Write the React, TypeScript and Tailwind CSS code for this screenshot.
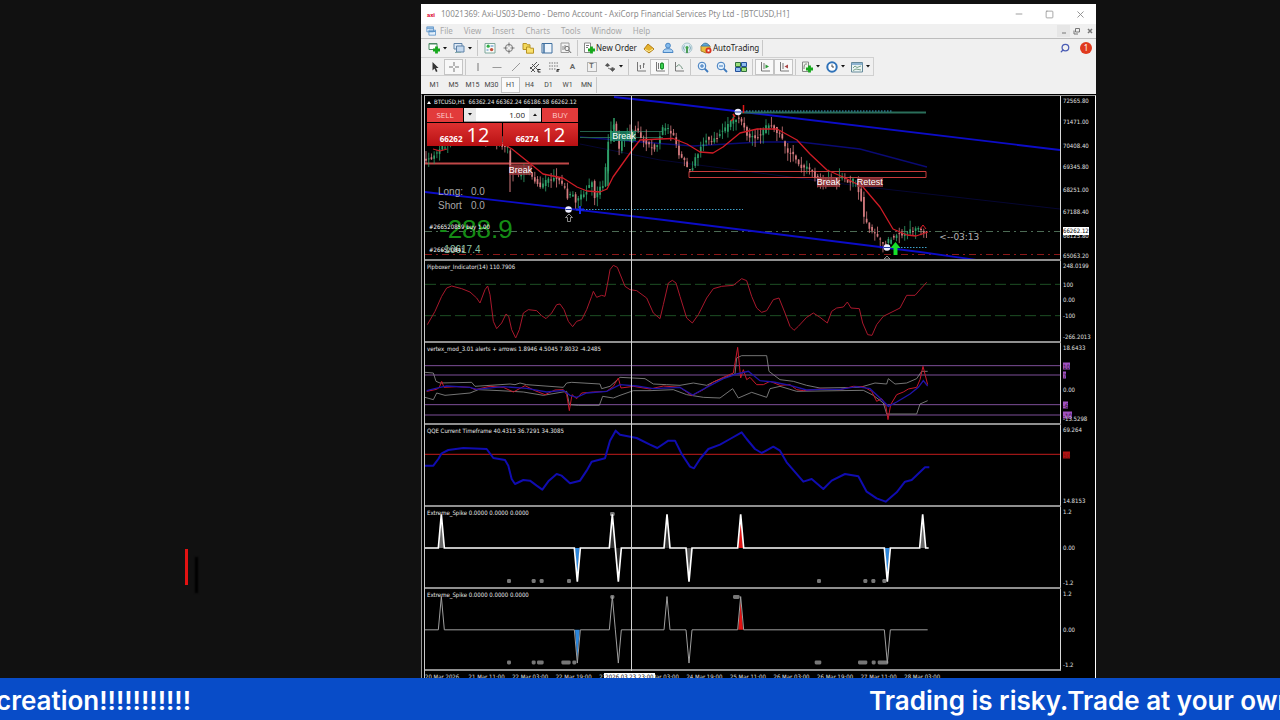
import { useState } from 'react';
import type { ReactNode } from 'react';
import { Minus, Square, X, Search } from 'lucide-react';

type Point = [number, number];

/* ---------- helpers ---------- */

const toPath = (data: string) => 'M' + data.trim().split(/\s+/).join('L');

const parse = (data: string): Point[] =>
  data.trim().split(/\s+/).map((p) => p.split(',').map(Number) as Point);

const priceTrack = parse(`
  425,158 432,160 438,152 445,147 455,138 470,132 490,138 505,147 509,149 511,170 515,172 520,174 530,172 536,180
  543,187 548,181 555,178 562,183 568,192 570,202 573,190 577,203 582,196 588,190 593,180 596,196 602,188
  606,184 608,150 611,135 614,122 618,132 620,150 624,138 631,133 638,130 643,139 650,145 657,148 661,135
  665,127 671,130 676,140 680,155 686,162 690,170 694,167 700,150 708,138 715,141 722,133 728,128 734,120
  740,117 744,122 749,135 754,137 762,135 768,126 774,128 782,136 788,152 796,155 803,168 810,168 816,176
  822,182 828,178 836,182 842,176 850,182 856,181 862,195 866,222 872,228 878,238 884,243 888,244 892,238
  898,235 904,236 912,231 920,229 928,234`);

const priceAt = (x: number) => {
  const i = Math.max(1, priceTrack.findIndex((p) => p[0] >= x));
  const [x0, y0] = priceTrack[i - 1];
  const [x1, y1] = priceTrack[i];
  return y0 + ((y1 - y0) * (x - x0)) / (x1 - x0);
};

const noise = (n: number) => {
  const v = Math.sin(n * 91.7 + 13.1) * 4375.5;
  return v - Math.floor(v);
};

const candles = Array.from({ length: 185 }, (_, i) => {
  const x = 426 + i * 2.72;
  const open = priceAt(x - 1.4) + (noise(i) - 0.5) * 5;
  const close = priceAt(Math.min(x + 1.4, 928)) + (noise(i + 400) - 0.5) * 5;
  const top = Math.min(open, close);
  const bottom = Math.max(open, close, top + 1);
  return {
    x,
    top,
    bottom,
    high: top - noise(i + 90) * 9,
    low: bottom + noise(i + 220) * 9,
    up: close < open,
  };
});

/* ---------- toolbar icons ---------- */

const Icon = ({ children }: { children: ReactNode }) => (
  <svg viewBox="0 0 12 12" className="h-3 w-3 shrink-0" fill="none" stroke="#777" strokeWidth="1" aria-hidden="true">
    {children}
  </svg>
);

const Caret = () => (
  <svg viewBox="0 0 4 3" className="h-[3px] w-1 shrink-0" aria-hidden="true"><path d="M0 0h4L2 2.6z" fill="#111" /></svg>
);

const plus = <path d="M8.500 4.500v7M5 8h7" stroke="#16a81c" strokeWidth="2.800" />;

const icons: Record<string, ReactNode> = {
  newChart: <><path d="M1 1.500h8v6H1z" fill="#fff" stroke="#4a8a62" /><path d="M1 2h8" stroke="#4a8a62" />{plus}</>,
  profiles: <><path d="M1 1.500h8v5.500H1z" fill="#dfeaf6" stroke="#5f83a8" /><path d="M3.500 4h7.500v6H3.500z" fill="#c5d9ee" stroke="#5f83a8" /><path d="M2 10.500h6" stroke="#8aa" /></>,
  market: <><path d="M1 1.500h10v9.500H1z" fill="#f7fbf9" stroke="#7fa89c" /><circle cx="4.200" cy="4.200" r="1.600" fill="#2fae43" stroke="none" /><circle cx="7.600" cy="7.600" r="1.700" fill="#c4513b" stroke="none" /><path d="M6.500 4h3M2.500 8h2" stroke="#4b86c4" /></>,
  target: <><circle cx="6" cy="6" r="3.600" /><path d="M6 .5v4M6 7.500v4M.5 6h4M7.500 6h4" stroke="#777" /></>,
  navigator: <><path d="M1 1.500h3.500l1 1.300H8v4.700H1z" fill="#f4d95a" stroke="#b79324" /><path d="M4.500 5h3l1 1.200h3v5h-7z" fill="#f9e06c" stroke="#b79324" /></>,
  terminal: <><path d="M1 1.500h10v9.500H1z" fill="#eef5fc" stroke="#3f6f9f" /><path d="M3 2v9" stroke="#3f6f9f" strokeWidth="1.500" /></>,
  tester: <><path d="M1 1h8v9.500H1z" fill="#f3f3f3" stroke="#9a9a9a" /><path d="M3 8V4M5 7V3" stroke="#888" /><circle cx="7" cy="6.500" r="2.200" /><path d="M8.600 8.200l2.600 2.800" stroke="#666" /></>,
  order: <><path d="M1.500 1h6v9.500h-6z" fill="#fff" stroke="#888" /><path d="M3 3.500h3M3 5.500h2" />{plus}</>,
  editor: <><path d="M1 7l4-5 6 5-5 4z" fill="#e5b32f" stroke="#b27d15" /><path d="M2 7.500l4 2 4-2.500" stroke="#fff2a8" /></>,
  cloud: <><circle cx="6" cy="3.600" r="2.400" fill="#82b9ec" stroke="#4a86c4" /><path d="M1 10.500c0-3 2-3.800 5-3.800s5 .8 5 3.800z" fill="#a9d1f4" stroke="#4a86c4" /></>,
  signal: <><circle cx="6" cy="6" r="5" fill="#dfeef2" stroke="#a8c4cc" /><path d="M3.500 8.500a4 4 0 0 1 0-5M8.500 8.500a4 4 0 0 0 0-5" stroke="#7fa6b8" /><path d="M6 11V6" stroke="#4c9a55" strokeWidth="2" /><circle cx="6" cy="5.500" r="1.500" fill="#3fa34a" stroke="none" /></>,
  auto: <><path d="M1 4l5-2.500L10 4v5l-4 2-5-2z" fill="#e9bd3d" stroke="#a9802a" /><path d="M1.500 4c2-4 6-3.500 8 0z" fill="#5fa8d6" stroke="#3f7fae" /><circle cx="8.500" cy="8.500" r="3" fill="#d8321f" stroke="none" /><path d="M7.500 7.500h2v2h-2z" fill="#fff" stroke="none" /></>,
  cursor: <path d="M3.500 1v8.500l2-2 1.500 3.500 1.500-.7L7 7h2.600z" fill="#333" stroke="none" />,
  cross: <path d="M6 1v4M6 7v4M1 6h4M7 6h4" />,
  vline: <path d="M6 2v8" />,
  hline: <path d="M1.500 6.500h9" stroke="#999" />,
  trend: <path d="M2 10l8-8" stroke="#999" />,
  channel: <><path d="M1 8l7-7M2 11l8-8M3 3l6 6M1 6l5 5" stroke="#555" /><path d="M9 8.500h2.500M9 11h2.500M9 8v3" stroke="#222" /></>,
  fibo: <><path d="M1 2h10M1 5h10M1 8h7" strokeDasharray="1.500 1" /><path d="M9 11V8.500h2.500M9 10h2" stroke="#333" /></>,
  textBox: <path d="M1.500 1.500h9v9h-9z" strokeDasharray="1 1" />,
  arrows: <><path d="M1 4.500L3.500 2 6 4.500 3.500 6z" fill="#555" stroke="none" /><path d="M6 8l2.500 2.500L11 8 8.500 6.500zM4 7l2 1" fill="#555" /></>,
  bars: <path d="M2.500 1v9h8.500M5.500 8V4M4.500 5h1M8.500 7V2M8.500 3h1.500" stroke="#777" />,
  candles: <><path d="M2.500 1v9h8.500M4.500 2v6" stroke="#777" /><path d="M8 1v8" stroke="#1b8f2b" /><path d="M6.500 2.500h3v5h-3z" fill="#3bd052" stroke="#1b8f2b" /></>,
  line: <><path d="M2.500 1v9h8.500" stroke="#777" /><path d="M3.500 6c2-4 4-2 6 2" stroke="#6a8f7a" /></>,
  zoomIn: <><circle cx="5" cy="5" r="3.800" fill="#e2f0fc" stroke="#3c79bd" /><path d="M3 5h4M5 3v4" stroke="#3c79bd" /><path d="M7.700 7.700l3.300 3.300" stroke="#3c79bd" strokeWidth="1.800" /></>,
  zoomOut: <><circle cx="5" cy="5" r="3.800" fill="#e2f0fc" stroke="#3c79bd" /><path d="M3 5h4" stroke="#3c79bd" /><path d="M7.700 7.700l3.300 3.300" stroke="#3c79bd" strokeWidth="1.800" /></>,
  tile: <><path d="M.5 1.500h5v4h-5zM6.500 6.500h5v4h-5z" fill="#9adf7c" stroke="#2f6f3c" /><path d="M6.500 1.500h5v4h-5zM.5 6.500h5v4h-5z" fill="#8fbdf0" stroke="#234f9a" /></>,
  scroll: <><path d="M2.500 1v9h8.500M5 8V2" stroke="#777" /><path d="M6.500 3.500v4L10 5.500z" fill="#2e9a3a" stroke="none" /></>,
  shift: <><path d="M2.500 1v9h8.500M5 8V2" stroke="#777" /><path d="M10 3.500v4L6.500 5.500z" fill="#a44" stroke="none" /></>,
  indicator: <><path d="M1.500 1h6v9.500h-6z" fill="#eef4ea" stroke="#888" /><path d="M3 8c0-5 1-5 3-5" />{plus}</>,
  clock: <><circle cx="6" cy="6" r="4.700" fill="#fff" stroke="#2f72b8" strokeWidth="2" /><path d="M6 3.500V6h2" stroke="#444" /></>,
  template: <><path d="M.5 1.500h11v9.500H.5z" fill="#eaf4f4" stroke="#668a9a" /><path d="M.5 3h11" stroke="#6f9fc4" strokeWidth="1.500" /><path d="M2 7l2-2 2 1.500L10 5M2 9.500l3-1.500 5 1" stroke="#7aa388" /></>,
};

const Tool = ({ name, caret, boxed, letter }: { name: string; caret?: boolean; boxed?: boolean; letter?: string }) => (
  <button
    aria-label={name}
    className={`relative flex h-4 shrink-0 items-center justify-center gap-[3px] ${caret ? 'w-[25px]' : 'w-[19px]'} ${boxed ? 'border border-[#c4c4c4] bg-[#f8f8f8]' : ''}`}
  >
    {icons[name] && <Icon>{icons[name]}</Icon>}
    {letter && <span className={`font-bold text-[#666] ${icons[name] ? 'absolute text-[7px]' : 'text-[8px]'}`}>{letter}</span>}
    {caret && <Caret />}
  </button>
);

const Divider = () => <span className="mx-[2px] h-4 w-px shrink-0 bg-[#c8c8c8]" />;

/* ---------- chart data (panel units are a third of a pixel) ---------- */

const pipboxer = `22,200 45,160 65,115 80,90 95,84 125,92 150,102 170,120 180,135 195,95 203,84 210,110 220,190 230,212
  245,195 258,168 266,175 275,215 287,240 298,215 310,165 325,155 350,158 365,173 378,182 395,165 410,140 420,138
  432,155 445,190 458,206 470,190 485,185 500,155 515,115 520,100 530,118 545,112 555,115 563,75 570,35 580,22
  592,28 605,60 615,85 630,95 650,98 680,120 700,165 720,182 730,140 745,75 757,67 768,75 780,115 800,180 817,195
  835,170 860,120 880,92 905,85 940,82 965,62 980,68 995,115 1010,150 1025,163 1040,158 1060,125 1077,120 1095,165
  1110,205 1122,217 1135,205 1160,178 1180,165 1200,178 1222,195 1235,160 1250,150 1270,147 1282,132 1293,150
  1318,152 1328,195 1343,230 1356,232 1370,200 1390,175 1440,150 1460,112 1485,112 1500,95 1520,73`;

const vertexFast = `20,400 50,394 58,388 65,370 72,388 110,386 150,388 165,395 210,385 250,388 280,402 315,383 345,398
  375,410 405,396 430,395 440,410 448,458 456,410 470,422 485,405 520,402 560,400 580,385 595,360 603,390 640,385
  690,393 730,384 780,388 800,402 815,413 850,395 880,372 910,358 940,345 953,268 962,360 970,335 980,365 990,358
  1010,380 1030,380 1050,370 1080,382 1110,380 1130,395 1150,398 1200,393 1260,395 1300,385 1330,386 1355,400
  1370,430 1385,422 1397,440 1404,485 1412,440 1430,410 1450,402 1465,393 1490,388 1500,365 1509,325 1523,380`;

const vertexSlow = `20,398 60,388 80,384 150,388 170,394 250,386 320,391 380,402 430,397 450,412 470,418 500,405 560,400
  600,380 650,384 700,392 780,388 818,411 860,388 910,362 950,348 985,340 1020,368 1060,372 1110,382 1160,396
  1200,394 1260,394 1310,386 1350,392 1380,420 1405,445 1430,432 1470,408 1495,388 1510,368 1523,384`;

const vertexUpper = `15,343 40,345 48,370 60,375 155,373 165,385 270,378 285,380 300,375 320,380 430,388 440,375 455,373
  540,378 545,392 570,385 600,358 675,362 700,378 740,380 780,382 820,375 860,382 880,372 905,362 945,348 950,300
  965,293 1040,293 1047,340 1060,350 1080,365 1120,370 1160,382 1200,390 1320,388 1365,375 1400,378 1405,362
  1425,378 1460,375 1490,362 1505,340 1523,340`;

const vertexLower = `15,418 40,425 50,405 75,412 150,405 175,395 240,398 310,402 370,412 440,400 448,440 475,442 538,442
  548,415 580,420 600,412 640,398 690,398 760,395 800,410 850,418 900,420 938,392 955,420 995,403 1040,418 1050,392
  1080,385 1130,400 1260,398 1330,397 1360,412 1390,435 1400,468 1490,468 1500,438 1523,428`;

const qqe = `15,125 40,125 55,105 65,88 85,78 130,72 200,75 220,102 255,108 265,125 275,165 285,180 310,168 330,170
  350,185 367,197 385,172 410,150 425,155 450,178 480,170 500,140 515,113 555,103 570,50 587,20 600,32 650,42
  690,62 712,72 745,50 765,50 785,90 810,128 822,133 840,105 865,75 900,62 930,45 965,25 980,45 1005,75 1025,87
  1060,68 1080,80 1100,115 1150,173 1175,165 1210,195 1235,170 1275,150 1315,157 1340,203 1370,223 1397,233
  1430,205 1455,173 1475,168 1515,130 1528,130`;

type Spike = { x: number; dir: 1 | -1; fill?: string };

const filledSpikes: Spike[] = [
  { x: 64, dir: 1, fill: '#666' },
  { x: 472, dir: -1, fill: '#2b86dc' },
  { x: 577, dir: 1, fill: '#333' },
  { x: 595, dir: -1, fill: '#222' },
  { x: 741, dir: 1, fill: '#333' },
  { x: 807, dir: -1, fill: '#555' },
  { x: 962, dir: 1, fill: '#e01212' },
  { x: 1402, dir: -1, fill: '#2b86dc' },
  { x: 1508, dir: 1, fill: '#666' },
];

const thinSpikes: Spike[] = [
  { x: 64, dir: 1 },
  { x: 472, dir: -1, fill: '#2b86dc' },
  { x: 577, dir: 1 },
  { x: 595, dir: -1 },
  { x: 741, dir: 1 },
  { x: 807, dir: -1 },
  { x: 962, dir: 1, fill: '#e01212' },
  { x: 1402, dir: -1 },
];

const spikeLine = (list: Spike[], base: number, end: number) =>
  `M15 ${base}` + list.map((s) => `L${s.x - 9} ${base}L${s.x} ${base - s.dir * 101}L${s.x + 9} ${base}`).join('') + `H${end}`;

/* ---------- panels ---------- */

type AxisMark = { at: number; text: string; tag?: string };

const Panel = ({ title, view, marks, children, overlay }: {
  title: ReactNode;
  view: string;
  marks: AxisMark[];
  children: ReactNode;
  overlay?: ReactNode;
}) => (
  <section className="flex min-h-0">
    <div className="relative min-w-0 flex-1 border-r border-b-2 border-r-[#d8d8d8] border-b-[#8f8f8f]">
      <svg viewBox={view} preserveAspectRatio="none" className="absolute inset-0 h-full w-full" fill="none">
        {children}
      </svg>
      <h2 className="absolute top-[2px] left-[2px] flex items-center gap-[3px] text-[6px] leading-[8px] whitespace-pre text-[#e8e8e8]">{title}</h2>
      {overlay}
    </div>
    <div className="relative w-[34px] shrink-0 text-[6px] leading-[8px] text-[#e0e0e0]">
      {marks.map((m) => (
        <span
          key={m.text}
          className={`absolute left-[2px] -translate-y-1/2 ${m.tag ?? ''}`}
          style={{ top: `${m.at}%` }}
        >
          {m.text}
        </span>
      ))}
    </div>
  </section>
);

const SpikePanel = ({ view, base, list, end, color, width, dots }: {
  view: string;
  base: number;
  list: Spike[];
  end: number;
  color: string;
  width: number;
  dots: [number, number, number][];
}) => (
  <Panel
    title="Extreme_Spike 0.0000 0.0000 0.0000"
    view={view}
    marks={[{ at: 6, text: '1.2' }, { at: 50, text: '0.00' }, { at: 93, text: '-1.2' }]}
  >
    {dots.map(([x, y, w]) => (
      <rect key={`${x}-${y}`} x={x - w / 2} y={y - 6} width={w} height="12" rx="4" fill="#777" />
    ))}
    {list.filter((s) => s.fill).map((s) => (
      <path key={s.x} d={`M${s.x - 7} ${base}L${s.x} ${base - s.dir * 90}L${s.x + 7} ${base}z`} fill={s.fill} />
    ))}
    <path d={spikeLine(list, base, end)} stroke={color} strokeWidth={width} />
  </Panel>
);

const OneClickTrade = () => {
  const [volume, setVolume] = useState('1.00');
  const step = (d: number) => setVolume((Number(volume) + d).toFixed(2));

  return (
    <div className="absolute top-3 left-[2px] w-[151px] font-['Open_Sans',sans-serif] text-white">
      <div className="flex h-[14px] text-[8px] leading-[14px]">
        <span className="w-9 bg-[#e23b3b] text-center text-[#ffd0d0]">SELL</span>
        <div className="mx-px flex min-w-0 flex-1 border-b border-[#999] bg-white">
          <button aria-label="Decrease volume" onClick={() => step(-0.01)} className="flex w-3 items-center justify-center bg-[#e8e8e8]"><Caret /></button>
          <input
            aria-label="Volume"
            value={volume}
            onChange={(e) => setVolume(e.target.value)}
            className="min-w-0 flex-1 bg-white pr-1 text-right text-[8px] leading-[13px] text-[#222]"
          />
          <button aria-label="Increase volume" onClick={() => step(0.01)} className="flex w-3 rotate-180 items-center justify-center bg-[#e8e8e8]"><Caret /></button>
        </div>
        <span className="w-9 bg-[#e23b3b] text-center text-[#ffd0d0]">BUY</span>
      </div>
      <div className="mt-px grid grid-cols-2 gap-px">
        {['66262', '66274'].map((price) => (
          <button key={price} className="flex h-[23px] items-baseline justify-center gap-1 bg-linear-to-b from-[#dd3030] to-[#b90f12]">
            <span className="text-[8px] font-bold">{price}</span>
            <span className="text-[20px] leading-[24px]">12</span>
          </button>
        ))}
      </div>
    </div>
  );
};

const Marker = ({ x, y }: { x: number; y: number }) => (
  <g>
    <circle cx={x} cy={y} r="3.300" fill="#eef" />
    <path d={`M${x - 3} ${y}h6`} stroke="#223a9a" strokeWidth="1" />
  </g>
);

const arial = "font-['Liberation_Sans',sans-serif]";
const tag = `absolute h-[10px] text-[9px] leading-[10px] text-white ${arial}`;

const PricePanel = () => (
  <Panel
    title={
      <>
        <svg viewBox="0 0 4 3" className="h-[3px] w-1" aria-hidden="true"><path d="M0 3h4L2 0z" fill="#fff" /></svg>
        BTCUSD,H1  66362.24 66362.24 66186.58 66262.12
      </>
    }
    view="425 96 635 163"
    marks={[
      { at: 3, text: '72565.80' },
      { at: 16, text: '71471.00' },
      { at: 30, text: '70408.40' },
      { at: 43, text: '69345.80' },
      { at: 57, text: '68251.00' },
      { at: 70, text: '67188.40' },
      { at: 85, text: '66125.80' },
      { at: 82, text: '66262.12', tag: 'bg-white text-black' },
      { at: 97, text: '65063.20' },
    ]}
    overlay={
      <>
        <span className={`${tag} top-[35px] left-[29.500%] bg-[#1b8a68]/80`}>Break</span>
        <span className={`${tag} top-[69px] left-[13.200%] bg-[#a03a40]/80`}>Break</span>
        <span className={`${tag} top-[81px] left-[61.700%] bg-[#a03a40]/80`}>Break</span>
        <span className={`${tag} top-[81px] left-[68%] bg-[#a03a40]/80`}>Retest</span>
        <dl className={`absolute top-[89px] left-[13px] grid grid-cols-[auto_auto] gap-x-2 text-[10px] leading-[14px] text-[#a8a8a8] ${arial}`}>
          <dt>Long:</dt><dd>0.0</dd>
          <dt>Short</dt><dd>0.0</dd>
        </dl>
        <span className={`absolute top-[120px] left-[14px] text-[26px] leading-[26px] text-[#158c15] ${arial}`}>-288.9</span>
        <span className="absolute top-[127px] left-1 text-[6px] leading-[8px] text-white">#266520859 buy 1.00</span>
        <span className={`absolute top-[148px] left-4 text-[10px] leading-[12px] text-[#8fc4a4] ${arial}`}>-10617.4</span>
        <span className="absolute top-[150px] left-1 text-[6px] leading-[8px] text-white">#266520841</span>
        <span className="absolute top-[135px] left-[81%] font-['DejaVu_Sans',sans-serif] text-[9px] leading-[12px] text-[#b4b4b4]">&lt;--03:13</span>
        <OneClickTrade />
      </>
    }
  >
    <path d="M425 231.500H1060" stroke="#4c6a54" strokeDasharray="7 4 2 4" />
    <path d="M425 254.500H1060" stroke="#8c1818" strokeDasharray="7 4 2 4" />
    <path d="M580 137L660 143.500L693 146L760 142H800L860 149L927 167" stroke="#0a0a74" strokeWidth="1.300" />
    <path d="M580 144L660 160L867 187L1060 209" stroke="#060632" />
    <path d="M580 131.500H663M580 137.500H663" stroke="#235e4a" />
    <path d="M425 163.500H569" stroke="#c04848" strokeWidth="2" />
    <path d="M689 171.500H926V177.500H689z" stroke="#c83a3a" />
    {candles.map((c) => (
      <g key={c.x} stroke={c.up ? '#2fa06a' : '#d67c80'}>
        <path d={`M${c.x} ${c.high}V${c.low}`} strokeWidth="0.800" />
        <path d={`M${c.x} ${c.top}V${c.bottom}`} strokeWidth="1.700" />
      </g>
    ))}
    <path d="M510 160V192" stroke="#d67c80" />
    <path d="M608 186V150M614 142V118" stroke="#2fa06a" strokeWidth="1.500" />
    <path
      d="M433 149L440 151L447 149M500 142L512 149L527 161L543 174L563 178L577 187L587 191L600 192L607 189L613 177L633 149L640 140L660 139L673 138.500L687 144L700 152L713 153L723 147L740 133L757 129L777 129L797 140L810 154L827 170L843 177L863 187L880 207L893 229L907 235L916 236L928 232"
      stroke="#d01c26" strokeWidth="1.300" strokeLinejoin="round"
    />
    <path d="M614 97L660 102L1060 150M425 192L660 219.500L920 252L977 260" stroke="#0c0cc8" strokeWidth="1.800" />
    <path d="M740 112.500H926" stroke="#2a6e5a" strokeWidth="1.800" />
    <path d="M746 111H892M583 209.500H743M895 247.500H928" stroke="#3fa0c8" strokeDasharray="1.500 1.500" />
    <path d="M743.500 105v8M731 121l3-3M733 114l2 3" stroke="#e01818" strokeWidth="1.500" />
    <path d="M576 209.500h8M580 206v8" stroke="#1428f0" strokeWidth="2" />
    <path d="M569 214l3.500 3.500h-2v4h-3v-4h-2zM887 256l3 3h-6z" stroke="#aaa" strokeWidth="0.800" />
    <path d="M895.500 242l5 6h-3v7h-4v-7h-3z" fill="#16e02a" />
    <path d="M920 229l3-4 3 4" stroke="#d81c26" />
    <Marker x={568.5} y={209.5} />
    <Marker x={738} y={112} />
    <Marker x={887} y={247.5} />
  </Panel>
);

const timeLabels = [
  '20 Mar 2026', '21 Mar 11:00', '22 Mar 03:00', '22 Mar 19:00', '23 Mar 11:00', '24 Mar 03:00',
  '24 Mar 19:00', '25 Mar 11:00', '26 Mar 03:00', '26 Mar 19:00', '27 Mar 11:00', '28 Mar 03:00',
];

const purple = 'bg-[#a050c0] text-[#201028] leading-[7px]';

const Charts = () => (
  <main className="min-h-0 flex-1 border-t border-l border-t-black border-l-[#9a9a9a] bg-black pl-[2px]">
    <div className="relative grid h-full grid-rows-[165fr_82fr_82fr_82fr_82fr_82fr_7px] overflow-hidden border-t border-r border-l border-t-[#9a9a9a] border-r-white border-l-[#c8c8c8] font-['DejaVu_Sans_Condensed','DejaVu_Sans',sans-serif]">
      <PricePanel />

      <Panel
        title="Pipboxer_Indicator(14) 110.7906"
        view="15 9 1905 240"
        marks={[{ at: 6, text: '248.0199' }, { at: 29, text: '100' }, { at: 48, text: '0.00' }, { at: 67, text: '-100' }, { at: 93, text: '-266.2013' }]}
      >
        <path d="M15 79H1920M15 173H1920" stroke="#1d4f24" strokeWidth="3" strokeDasharray="33 12" />
        <path d={toPath(pipboxer)} stroke="#a8182c" strokeWidth="3" strokeLinejoin="round" />
      </Panel>

      <Panel
        title="vertex_mod_3.01 alerts + arrows 1.8946 4.5045 7.8032 -4.2485"
        view="15 255 1905 240"
        marks={[
          { at: 6, text: '18.6433' },
          { at: 28, text: '10', tag: purple },
          { at: 39, text: '7', tag: purple },
          { at: 57, text: '0.00' },
          { at: 76, text: '-6', tag: purple },
          { at: 88, text: '-10', tag: purple },
          { at: 93, text: '-13.5298' },
        ]}
      >
        <path d="M15 323H1920M15 351H1920M15 440H1920M15 471H1920" stroke="#7d4f98" strokeWidth="3" />
        <path d={toPath(vertexUpper)} stroke="#8c8c8c" strokeWidth="2.500" />
        <path d={toPath(vertexLower)} stroke="#8c8c8c" strokeWidth="2.500" />
        <path d={toPath(vertexFast)} stroke="#c8182c" strokeWidth="3" />
        <path d={toPath(vertexSlow)} stroke="#2014a8" strokeWidth="4" />
      </Panel>

      <Panel
        title="QQE Current Timeframe 40.4315 36.7291 34.3085"
        view="15 3 1905 240"
        marks={[{ at: 6, text: '69.264' }, { at: 36, text: '50', tag: 'bg-[#b01414] text-[#801010] leading-[7px]' }, { at: 93, text: '14.8153' }]}
      >
        <path d="M15 91H1920" stroke="#9c1616" strokeWidth="4" />
        <path d={toPath(qqe)} stroke="#100cb0" strokeWidth="6" strokeLinejoin="round" />
      </Panel>

      <SpikePanel
        view="15 249 1905 240"
        base={372}
        list={filledSpikes}
        end={1526}
        color="#fff"
        width={5}
        dots={[[577, 270, 14], ...[267, 341, 365, 447, 1197, 1336, 1360, 1393].map((x): [number, number, number] => [x, 471, 12])]}
      />
      <SpikePanel
        view="15 9 1905 243"
        base={133}
        list={thinSpikes}
        end={1523}
        color="#a0a0a0"
        width={3}
        dots={[[267, 232, 12], [341, 232, 12], [361, 232, 20], [438, 232, 28], [463, 232, 12], [1194, 232, 20], [1328, 232, 28], [1361, 232, 12], [1389, 232, 32], [577, 33, 12], [949, 33, 20]]}
      />

      <div className="relative mr-[34px]">
        <ol className="grid w-[82.200%] grid-cols-12 text-[6px] leading-[8px] whitespace-nowrap text-[#e0e0e0]">
          {timeLabels.map((t) => (
            <li key={t} className="pt-[2px]">{t}</li>
          ))}
        </ol>
        <span className="absolute top-[2px] left-[28.200%] bg-white px-px text-[6px] leading-[8px] whitespace-nowrap text-black">2026.03.23 23:00</span>
      </div>

      {/* crosshair */}
      <div className="pointer-events-none absolute inset-y-0 right-[34px] left-0 pb-[7px]">
        <div className="ml-[32.400%] h-full w-px bg-[#d4d4d4]" />
      </div>
    </div>
  </main>
);

/* ---------- window ---------- */

const TerminalWindow = () => (
  <div className="mt-1 flex min-h-0 min-w-0 flex-col overflow-hidden bg-[#f0f0f0]">
    <header className="flex h-5 shrink-0 items-center bg-white text-[#8c8c8c]">
      <span className="ml-[6px] w-[14px] text-[6px] font-black text-[#e0284a]">axi</span>
      <h1 className="flex-1 truncate font-['Noto_Sans',sans-serif] text-[8px] leading-[12px]">
        10021369: Axi-US03-Demo - Demo Account - AxiCorp Financial Services Pty Ltd - [BTCUSD,H1]
      </h1>
      <button aria-label="Minimize" className="flex w-[31px] justify-center"><Minus size={10} strokeWidth={2} /></button>
      <button aria-label="Maximize" className="flex w-[31px] justify-center"><Square size={9} strokeWidth={2} /></button>
      <button aria-label="Close" className="flex w-[31px] justify-center"><X size={11} strokeWidth={2} /></button>
    </header>

    <nav className="flex h-[15px] shrink-0 items-center border-b border-[#bdbdbd] font-['Noto_Sans',sans-serif] text-[8px] text-[#a8a8a8]">
      <span className="flex w-[19px] justify-center">
        <svg viewBox="0 0 12 12" className="h-[10px] w-[10px]" fill="#e4f0fb" stroke="#5b93c8"><path d="M1 1h8v6H1zM3.500 5h8v6h-8z" /><path d="M1 2.500h8M3.500 6.500h8" strokeWidth="1.500" /></svg>
      </span>
      <div className="flex gap-[11px]">
        {['File', 'View', 'Insert', 'Charts', 'Tools', 'Window', 'Help'].map((m) => (
          <button key={m}>{m}</button>
        ))}
      </div>
      <div className="ml-auto flex">
        <button aria-label="Minimize chart" className="flex w-[13px] justify-center bg-[#e6e6e6]"><Icon><path d="M4 8h4" /></Icon></button>
        <button aria-label="Restore chart" className="flex w-[13px] justify-center"><Icon><path d="M4.500 3.500h4v3.500h-4zM3 5.500v3.500h4" /></Icon></button>
        <button aria-label="Close chart" className="flex w-[13px] justify-center"><Icon><path d="M4 4l4 4M8 4l-4 4" strokeWidth="1.500" /></Icon></button>
      </div>
    </nav>

    <div className="flex h-[18px] shrink-0 items-center pl-1 font-['Noto_Sans',sans-serif] text-[8px] text-[#222]">
      <Tool name="newChart" caret />
      <Tool name="profiles" caret />
      <Divider />
      <Tool name="market" />
      <Tool name="target" />
      <Tool name="navigator" />
      <Tool name="terminal" />
      <Tool name="tester" />
      <Divider />
      <button className="flex items-center gap-px px-[3px]"><Icon>{icons.order}</Icon>New Order</button>
      <Tool name="editor" />
      <Tool name="cloud" />
      <Tool name="signal" />
      <button className="flex items-center gap-px px-[3px]"><Icon>{icons.auto}</Icon>AutoTrading</button>
      <span className="h-4 w-px bg-[#c8c8c8]" />
      <button aria-label="Search" className="ml-auto text-[#4a5cb4]"><Search size={10} strokeWidth={3} className="-scale-x-100" /></button>
      <button aria-label="1 notification" className="mr-1 ml-[10px] flex h-3 w-3 items-center justify-center rounded-full bg-[#e03a1e] text-[8px] text-white">1</button>
    </div>

    <div className="flex h-[19px] shrink-0 items-center">
      <div className="flex h-full items-center border-t border-r border-b border-[#d0d0d0] pl-1">
        <Tool name="cursor" />
        <Tool name="cross" boxed />
        <Divider />
        <Tool name="vline" />
        <Tool name="hline" />
        <Tool name="trend" />
        <Tool name="channel" />
        <Tool name="fibo" />
        <Tool name="text" letter="A" />
        <Tool name="textBox" letter="T" />
        <Tool name="arrows" caret />
        <Divider />
        <Tool name="bars" />
        <Tool name="candles" boxed />
        <Tool name="line" />
        <Divider />
        <Tool name="zoomIn" />
        <Tool name="zoomOut" />
        <Tool name="tile" />
        <Divider />
        <Tool name="scroll" boxed />
        <Tool name="shift" boxed />
        <Divider />
        <Tool name="indicator" caret />
        <Tool name="clock" caret />
        <Tool name="template" caret />
      </div>
    </div>

    <div className="flex h-[18px] shrink-0 items-center pl-1 text-[7px] text-[#444]">
      {['M1', 'M5', 'M15', 'M30', 'H1', 'H4', 'D1', 'W1', 'MN'].map((t) => (
        <button
          key={t}
          className={`h-4 w-[19px] ${t === 'H1' ? 'border border-[#c4c4c4] bg-[#fafafa]' : ''}`}
        >
          {t}
        </button>
      ))}
      <span className="h-4 w-px bg-[#c8c8c8]" />
    </div>

    <Charts />
  </div>
);

export default function App() {
  return (
    <div className="flex h-screen flex-col overflow-hidden bg-[#111] font-['Roboto',sans-serif]">
      <div className="grid min-h-0 flex-1 grid-cols-[421fr_675fr_184fr]">
        <div className="flex items-end pb-[93px] pl-[44%]">
          <span className="h-9 w-[3px] bg-[#e31212] shadow-[10px_8px_2px_#000]" />
        </div>
        <TerminalWindow />
      </div>

      <footer className="grid h-[42px] shrink-0 grid-cols-[869fr_411fr] items-center overflow-hidden bg-[#084cc8] pt-[3px] font-['Inter',sans-serif] text-[26px] font-semibold whitespace-nowrap text-white">
        <p className="-ml-1 min-w-0">creation!!!!!!!!!!!</p>
        <p className="min-w-0">Trading is risky.Trade at your own</p>
      </footer>
    </div>
  );
}
